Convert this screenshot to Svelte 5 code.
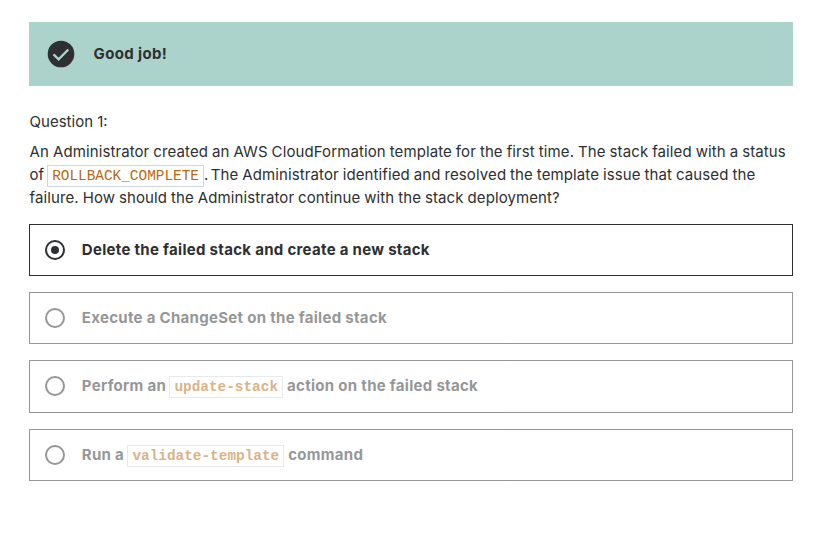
<script>
  const options = [
    { before: 'Delete the failed stack and create a new stack', selected: true },
    { before: 'Execute a ChangeSet on the failed stack' },
    { before: 'Perform an', code: 'update-stack', after: 'action on the failed stack', tall: true },
    { before: 'Run a', code: 'validate-template', after: 'command' }
  ];
</script>

<main>
  <div class="alert" role="status">
    <svg width="28" height="28" viewBox="0 0 28 28" aria-hidden="true">
      <circle cx="14" cy="14" r="13.3" fill="#2d2f31" />
      <path d="M6.5 14.4 L11.6 19.3 L21.3 9.5" fill="none" stroke="#acd2cc" stroke-width="2.4" />
    </svg>
    <strong>Good job!</strong>
  </div>

  <section class="question">
    <div class="number">Question 1:</div>
    <div class="prompt">
      <div><span class="l1">An Administrator created an AWS CloudFormation template for the first time. The stack failed with a status</span></div>
      <div><span>of</span><code>ROLLBACK_COMPLETE</code><span class="l2"><span class="stop">.</span> The Administrator identified and resolved the template issue that caused the</span></div>
      <div><span class="l3">failure. How should the Administrator continue with the stack deployment?</span></div>
    </div>
  </section>

  <div class="options">
    {#each options as option}
      <label class="option" class:selected={option.selected} class:tall={option.tall}>
        <input type="radio" name="answer" checked={option.selected} disabled={!option.selected} />
        <span class="radio"></span>
        <span class="answer">
          <span>{option.before}</span>{#if option.code}<code>{option.code}</code><span>{option.after}</span>{/if}
        </span>
      </label>
    {/each}
  </div>
</main>

<style>
  :global(body) { background: #fff; }
  main {
    box-sizing: border-box;
    width: 824px;
    height: 556px;
    padding: 22px 31px 0 29px;
    overflow: hidden;
    color: #2d2f31;
    font: 15px/23px Inter, "Liberation Sans", sans-serif;
  }
  .alert {
    display: flex;
    align-items: center;
    gap: 18.6px;
    height: 64px;
    box-sizing: border-box;
    padding-left: 18px;
    background: #acd2cc;
  }
  strong { padding-bottom: 2px; font-weight: 700; letter-spacing: 0.36px; }
  .question { padding: 24px 0 0 0.6px; }
  .prompt { padding-top: 7px; }
  .prompt > div { display: flex; height: 23px; align-items: center; white-space: pre; }
  .l1 { letter-spacing: 0.1px; word-spacing: -0.35px; }
  .l2 { letter-spacing: 0.105px; word-spacing: -0.4px; }
  .stop { margin-right: -1.5px; }
  .l3 { letter-spacing: 0.1px; word-spacing: -0.4px; }
  code {
    box-sizing: border-box;
    height: 22px;
    margin: 1px 0 0 3.5px;
    padding: 0 4px;
    border: 1px solid #d1d7dc;
    color: #b4690e;
    background: #fff;
    font: 14.4px/20px "Liberation Mono", monospace;
  }
  .prompt code { margin: 2px 0 0 3px; }
  .options { display: flex; flex-direction: column; gap: 16px; padding-top: 15px; }
  .option {
    display: flex;
    align-items: flex-start;
    box-sizing: border-box;
    height: 52px;
    padding: 15px 0 0 15px;
    border: 1px solid #2d2f31;
    font-weight: 700;
    opacity: 0.5;
  }
  .selected { opacity: 1; }
  .tall { height: 53px; }
  input { display: none; }
  .radio {
    box-sizing: border-box;
    display: flex;
    align-items: center;
    justify-content: center;
    width: 20px;
    height: 20px;
    border: 2px solid #2d2f31;
    border-radius: 50%;
  }
  .selected .radio::after { content: ""; width: 8px; height: 8px; border-radius: 50%; background: #2d2f31; }
  .answer {
    display: flex;
    align-items: flex-start;
    height: 22px;
    padding-left: 16.8px;
    line-height: 20px;
    letter-spacing: 0.3px;
    white-space: nowrap;
  }
  .option code { margin: 0 4px 0 3.3px; font-weight: 700; letter-spacing: 0; }
</style>
